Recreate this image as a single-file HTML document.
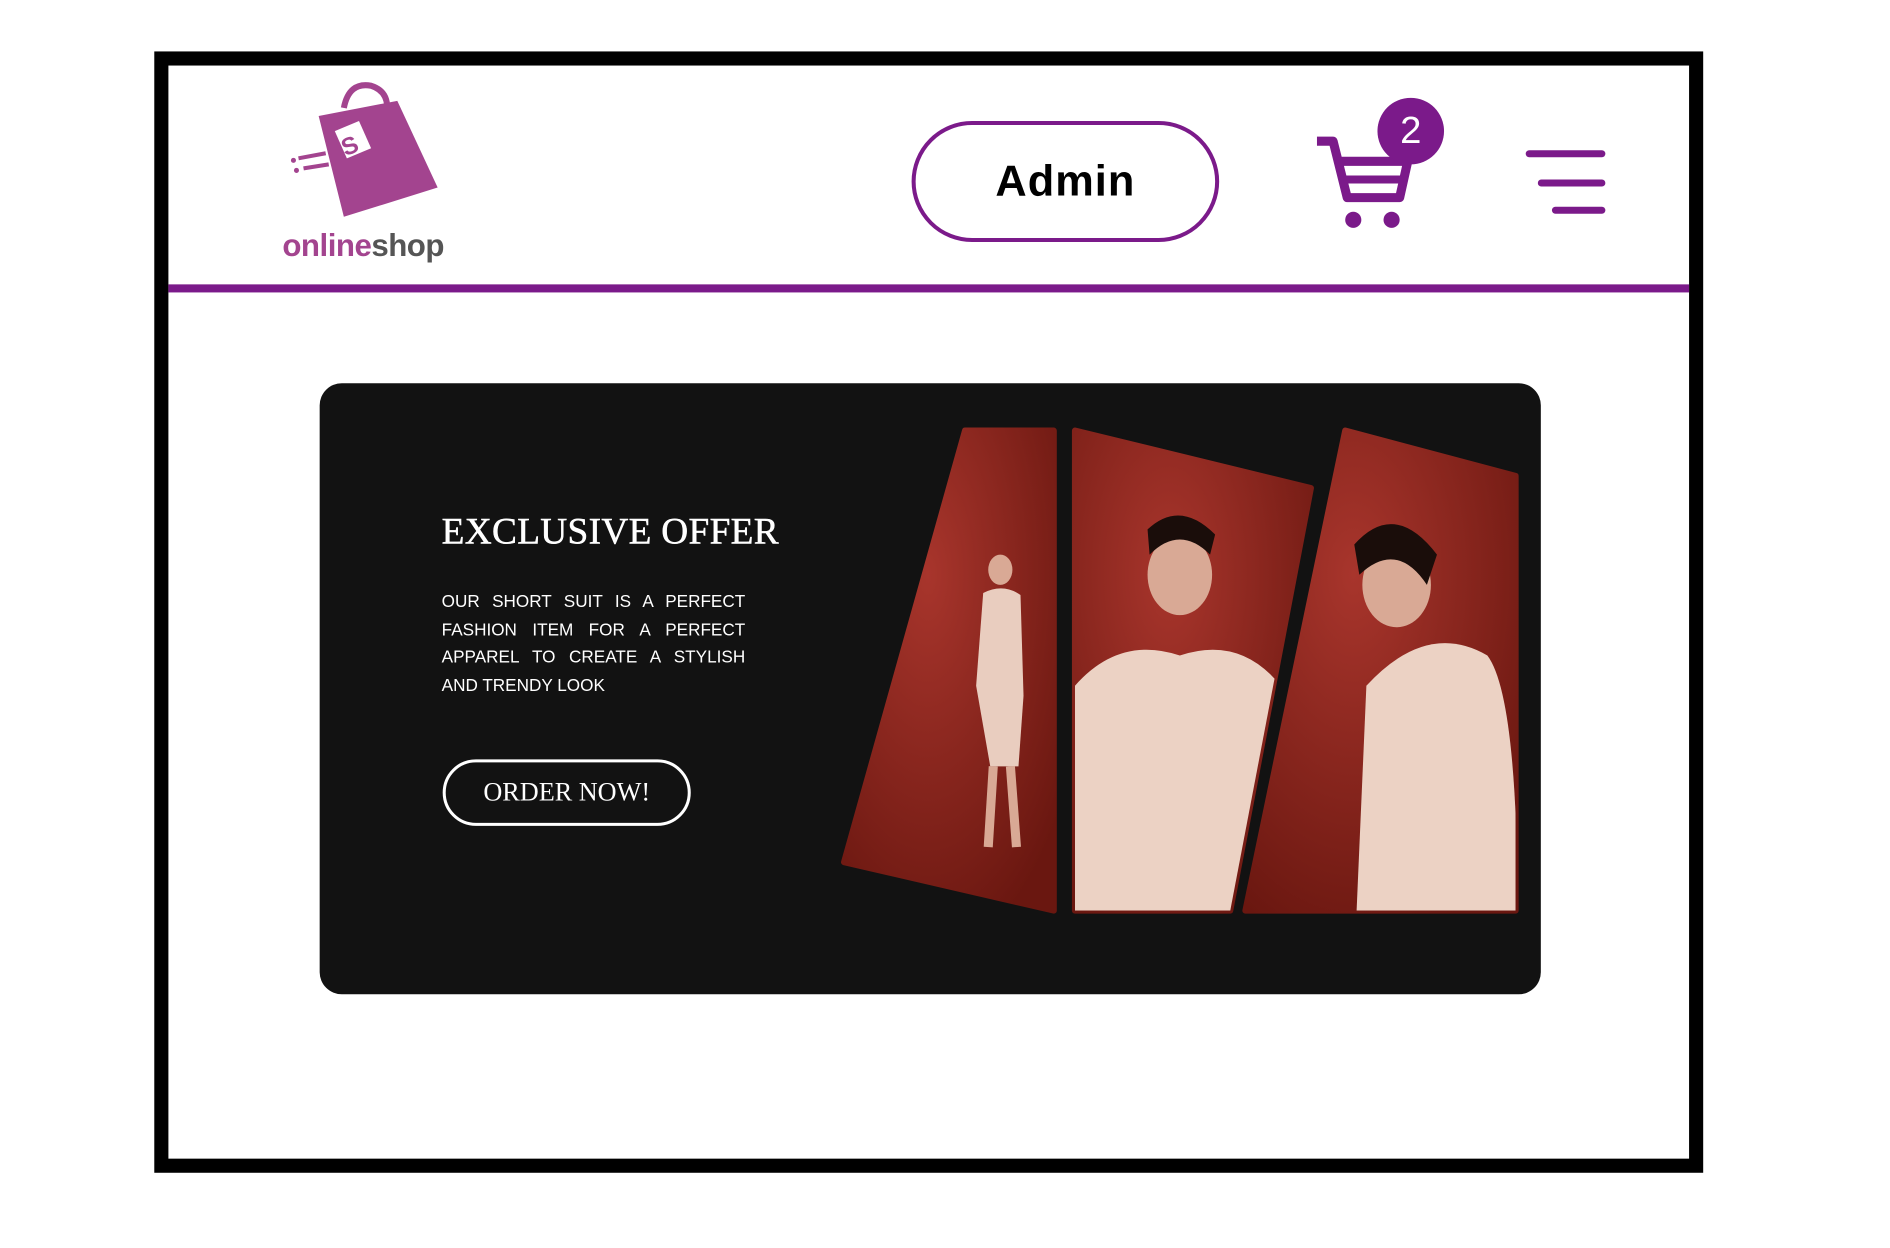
<!DOCTYPE html>
<html><head><meta charset="utf-8"><style>
html,body{margin:0;padding:0;background:#fff;width:1890px;height:1238px;overflow:hidden;font-family:"Liberation Sans",sans-serif}
.wrap{position:absolute;left:0;top:0;width:1890px;height:1238px;transform:scale(1.0084);transform-origin:0 0}
.frame{position:absolute;left:153px;top:51px;width:1508px;height:1084px;border:14px solid #000;background:#fff}
.line{position:absolute;left:167px;top:282px;width:1508px;height:8px;background:#7b1a8a}
.admin{position:absolute;left:904px;top:120px;width:305px;height:120px;border:4px solid #7b1a8a;border-radius:60px;box-sizing:border-box;text-align:center;line-height:112px;font-size:43px;font-weight:bold;color:#000;letter-spacing:1px}
.badge{position:absolute;left:1366px;top:97px;width:66px;height:66px;border-radius:50%;background:#7b1a8a;color:#fff;font-size:38px;text-align:center;line-height:66px}
.hb{position:absolute;height:7px;background:#7b1a8a;border-radius:4px}
.banner{position:absolute;left:317px;top:380px;width:1211px;height:606px;background:#121212;border-radius:22px}
.title{position:absolute;left:438px;top:506px;color:#fff;font-family:"Liberation Serif",serif;font-size:37px;letter-spacing:0.3px;-webkit-text-stroke:0.5px #fff}
.para{position:absolute;left:438px;top:583px;width:301px;color:#fff;font-size:17px;line-height:27.5px;text-align:justify}
.btn{position:absolute;left:439px;top:753px;width:246px;height:66px;border:3px solid #fff;border-radius:33px;box-sizing:border-box;color:#fff;font-family:"Liberation Serif",serif;font-size:26px;text-align:center;line-height:60px}
</style></head><body>
<div class="wrap">
<div class="frame"></div>
<div class="line"></div>
<svg style="position:absolute;left:276px;top:77px" width="200" height="190" viewBox="280 80 200 190">
<path d="M345 110 Q350 84 372 88 Q388 93 388 110" fill="none" stroke="#a3448f" stroke-width="6"/>
<polygon points="320,118 398,103 438,189 345,218" fill="#a3448f"/>
<polygon points="336,133 360,123 372,150 348,160" fill="#fff"/>
<text x="342" y="155" font-size="24" font-weight="bold" fill="#a3448f" transform="rotate(-22 352 145)">S</text>
<line x1="300" y1="160" x2="327" y2="155" stroke="#a3448f" stroke-width="4"/>
<line x1="305" y1="170" x2="330" y2="166" stroke="#a3448f" stroke-width="4"/>
<circle cx="295" cy="162" r="2.5" fill="#a3448f"/><circle cx="298" cy="172" r="2.5" fill="#a3448f"/>
<text x="284" y="257" font-size="31" font-weight="bold" fill="#a3448f" letter-spacing="-0.5">online<tspan fill="#555">shop</tspan></text>
</svg>
<div class="admin">Admin</div>
<svg style="position:absolute;left:1300px;top:128px" width="110" height="105" viewBox="0 0 110 105">
<path d="M6 12 H22 L36 68 H88 L96 32 H28" fill="none" stroke="#7b1a8a" stroke-width="9" stroke-linejoin="round"/>
<line x1="32" y1="50" x2="92" y2="50" stroke="#7b1a8a" stroke-width="8"/>
<circle cx="42" cy="90" r="8" fill="#7b1a8a"/><circle cx="80" cy="90" r="8" fill="#7b1a8a"/>
</svg>
<div class="badge">2</div>
<div class="hb" style="left:1513px;top:149px;width:79px"></div>
<div class="hb" style="left:1525px;top:178px;width:67px"></div>
<div class="hb" style="left:1539px;top:205px;width:53px"></div>
<div class="banner"></div>
<div class="title">EXCLUSIVE OFFER</div>
<div class="para">OUR SHORT SUIT IS A PERFECT FASHION ITEM FOR A PERFECT APPAREL TO CREATE A STYLISH AND TRENDY LOOK</div>
<div class="btn">ORDER NOW!</div>
<svg style="position:absolute;left:0;top:0" width="1890" height="1238">
<defs><radialGradient id="g" cx="0.4" cy="0.3" r="0.8"><stop offset="0" stop-color="#a8352c"/><stop offset="1" stop-color="#6a1710"/></radialGradient>
<clipPath id="c1"><polygon points="957,427 1045,427 1045,903 837,855"/></clipPath>
<clipPath id="c2"><polygon points="1066,427 1300,484 1220,903 1066,903"/></clipPath>
<clipPath id="c3"><polygon points="1334,427 1503,472 1503,903 1235,903"/></clipPath>
</defs>
<polygon points="957,427 1045,427 1045,903 837,855" fill="url(#g)" stroke="url(#g)" stroke-width="6" stroke-linejoin="round"/>
<polygon points="1066,427 1300,484 1220,903 1066,903" fill="url(#g)" stroke="url(#g)" stroke-width="6" stroke-linejoin="round"/>
<polygon points="1334,427 1503,472 1503,903 1235,903" fill="url(#g)" stroke="url(#g)" stroke-width="6" stroke-linejoin="round"/>
<g clip-path="url(#c1)">
<ellipse cx="992" cy="565" rx="12" ry="15" fill="#d9a995"/>
<path d="M975 588 Q995 578 1012 590 L1015 690 L1010 760 L982 760 L968 680 Z" fill="#e9cdbf"/>
<path d="M985 760 L980 840 M1002 760 L1008 840" stroke="#d9a995" stroke-width="9"/>
</g>
<g clip-path="url(#c2)">
<ellipse cx="1170" cy="570" rx="32" ry="40" fill="#d9a995"/>
<path d="M1138 525 Q1170 495 1205 530 L1200 550 Q1170 520 1140 550 Z" fill="#1a0d0a"/>
<path d="M1066 680 Q1110 630 1170 650 Q1230 630 1270 680 L1240 910 L1066 910 Z" fill="#ecd2c4"/>
</g>
<g clip-path="url(#c3)">
<ellipse cx="1385" cy="580" rx="34" ry="42" fill="#d9a995"/>
<path d="M1343 540 Q1383 495 1425 550 L1415 580 Q1385 535 1348 570 Z" fill="#1a0d0a"/>
<path d="M1355 680 Q1415 615 1475 650 Q1505 690 1505 910 L1345 910 Z" fill="#ecd2c4"/>
</g>
</svg>
</div>
</body></html>
